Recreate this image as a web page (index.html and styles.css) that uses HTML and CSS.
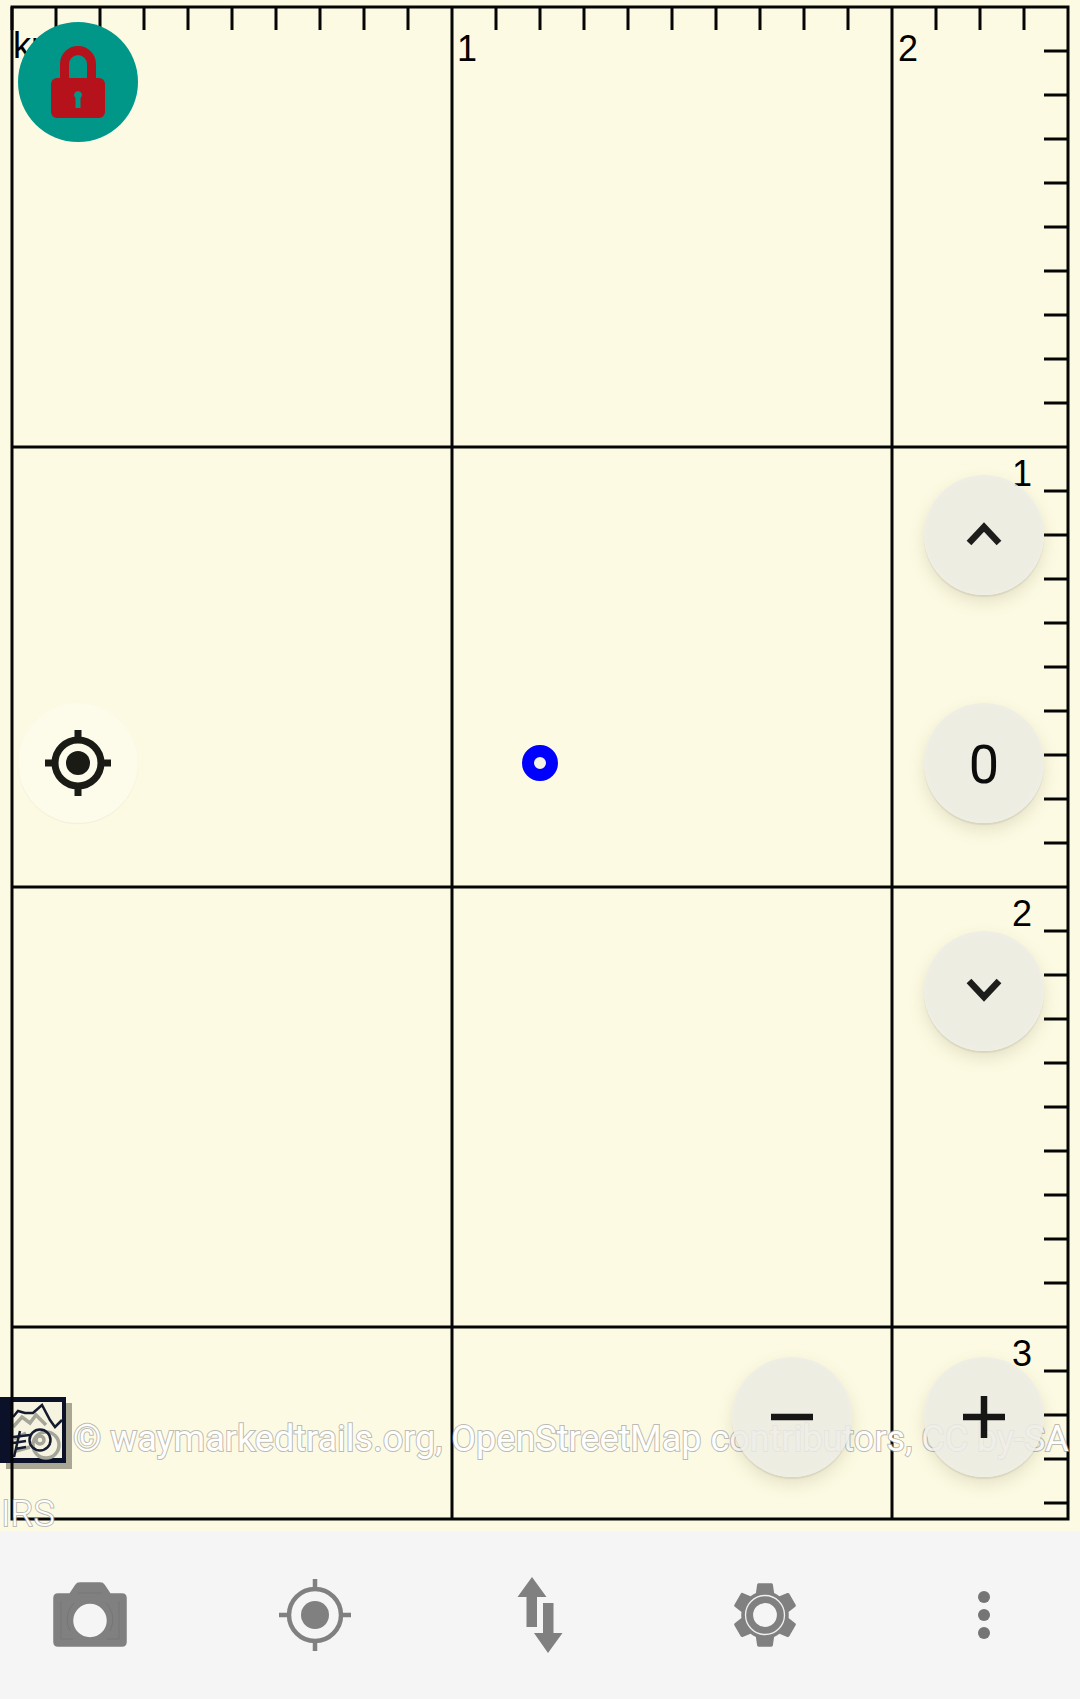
FILE: index.html
```html
<!DOCTYPE html>
<html lang="en">
<head>
<meta charset="utf-8">
<title>Map</title>
<link rel="stylesheet" href="styles.css">
</head>
<body>
<div class="screen">
  <main class="map">
    <svg class="overlay-thumb" width="72" height="72" viewBox="0 0 72 72">
      <rect class="thumb-shadow" x="6" y="6" width="66" height="66"/>
      <rect class="thumb-frame" x="0" y="0" width="66" height="66"/>
      <rect class="thumb-inner" x="13" y="5" width="49" height="56"/>
      <path class="thumb-hill-soft" d="M13 30 22 20 30 26 36 18 46 28M14 42 26 36M16 54 30 50"/>
      <circle class="thumb-hill-soft" cx="46" cy="48" r="13"/>
      <circle class="thumb-hill-soft" cx="40" cy="43" r="4"/>
      <path class="thumb-hill" d="M13 20 18 14 25 16 33 16 42 8 50 23 55 30 62 23M13 40 30 38M13 46 26 44M15 52 26 50M20 34 14 60"/>
      <circle class="thumb-hill" cx="40" cy="43" r="10.500"/>
    </svg>

    <svg class="ruler" width="1080" height="1531" viewBox="0 0 1080 1531">
      <path class="ruler-lines" d="M12 7H1068V1519H12ZM452 7V1519M892 7V1519M12 447H1068M12 887H1068M12 1327H1068"/>
      <path class="ruler-lines" d="M12 7V30M56 7V30M100 7V30M144 7V30M188 7V30M232 7V30M276 7V30M320 7V30M364 7V30M408 7V30M496 7V30M540 7V30M584 7V30M628 7V30M672 7V30M716 7V30M760 7V30M804 7V30M848 7V30M936 7V30M980 7V30M1024 7V30"/>
      <path class="ruler-lines" d="M1044 51H1068M1044 95H1068M1044 139H1068M1044 183H1068M1044 227H1068M1044 271H1068M1044 315H1068M1044 359H1068M1044 403H1068M1044 491H1068M1044 535H1068M1044 579H1068M1044 623H1068M1044 667H1068M1044 711H1068M1044 755H1068M1044 799H1068M1044 843H1068M1044 931H1068M1044 975H1068M1044 1019H1068M1044 1063H1068M1044 1107H1068M1044 1151H1068M1044 1195H1068M1044 1239H1068M1044 1283H1068M1044 1371H1068M1044 1415H1068M1044 1459H1068M1044 1503H1068"/>
      <text class="ruler-label" x="13" y="58">km</text>
      <text class="ruler-label" x="457" y="61">1</text>
      <text class="ruler-label" x="898" y="61">2</text>
      <text class="ruler-label" x="1012" y="486">1</text>
      <text class="ruler-label" x="1012" y="926">2</text>
      <text class="ruler-label" x="1012" y="1366">3</text>
    </svg>

    <span class="position-dot"></span>

    <p class="attribution">© waymarkedtrails.org, OpenStreetMap contributors, CC by-SA</p>
    <p class="attribution-second">IRS</p>

    <button class="lock-button" type="button" aria-label="Lock">
      <svg width="120" height="120" viewBox="0 0 120 120">
        <path class="lock-shackle" d="M46.500 60V42a13.500 13.500 0 0 1 27 0V60"/>
        <path class="lock-body" fill-rule="evenodd" d="M39 56H81a6 6 0 0 1 6 6V90a6 6 0 0 1-6 6H39a6 6 0 0 1-6-6V62a6 6 0 0 1 6-6ZM60 69a4 4 0 0 0-2.500 7.100V86h5V76.100A4 4 0 0 0 60 69Z"/>
      </svg>
    </button>

    <button class="locate-button" type="button" aria-label="Locate">
      <svg width="68" height="68" viewBox="0 0 68 68">
        <circle class="locate-ring" cx="34" cy="34" r="23"/>
        <circle class="locate-core" cx="34" cy="34" r="12"/>
        <path class="locate-ticks" d="M34 1V12M34 56V67M1 34H12M56 34H67"/>
      </svg>
    </button>

    <button class="round-button up-button" type="button" aria-label="Up">
      <svg width="40" height="28" viewBox="0 0 40 28"><path class="chevron" d="M5 22 20 6 35 22"/></svg>
    </button>
    <button class="round-button zero-button" type="button">0</button>
    <button class="round-button down-button" type="button" aria-label="Down">
      <svg width="40" height="28" viewBox="0 0 40 28"><path class="chevron" d="M5 4 20 20 35 4"/></svg>
    </button>
    <button class="round-button minus-button" type="button" aria-label="Zoom out">
      <svg width="44" height="44" viewBox="0 0 44 44"><path class="zoom-mark" d="M1 22H43"/></svg>
    </button>
    <button class="round-button plus-button" type="button" aria-label="Zoom in">
      <svg width="44" height="44" viewBox="0 0 44 44"><path class="zoom-mark" d="M1 22H43M22 1V43"/></svg>
    </button>
  </main>

  <nav class="toolbar">
    <svg class="tool tool-camera" width="72" height="72" viewBox="0 0 72 72">
      <path class="tool-fill camera-body" fill-rule="evenodd" d="M26 4H46Q49 4 50 6L56 15H68Q72 15 72 19V63Q72 67 68 67H4Q0 67 0 63V19Q0 15 4 15H16L22 6Q23 4 26 4ZM36 24a17.500 17.500 0 1 0 0 35 17.500 17.500 0 0 0 0-35Z"/>
      <path class="camera-detail" d="M7 22V60H19M65 22V60H53M24 14H48M16 52A24 24 0 0 1 20 24M56 52A24 24 0 0 0 52 24"/>
    </svg>
    <svg class="tool" width="72" height="72" viewBox="0 0 72 72">
      <circle class="tool-stroke" cx="36" cy="36" r="26"/>
      <circle class="tool-fill" cx="36" cy="36" r="14"/>
      <path class="tool-stroke" d="M36 0V10M36 62V72M0 36H10M62 36H72"/>
    </svg>
    <svg class="tool" width="72" height="80" viewBox="0 0 72 80">
      <path class="tool-fill" d="M28 2 42.500 22H33V52H22.500V22H13.500ZM39 28H49.500V58H58.500L44 78 30 58H39Z"/>
    </svg>
    <svg class="tool" width="72" height="72" viewBox="1.100 1.100 21.800 21.800">
      <path class="tool-fill" fill-rule="evenodd" d="M19.140 12.940c.04-.3.06-.61.06-.94 0-.32-.02-.64-.07-.94l2.030-1.580c.18-.14.23-.41.12-.61l-1.920-3.320c-.12-.22-.37-.29-.59-.22l-2.390.96c-.5-.38-1.030-.7-1.620-.94l-.36-2.540c-.04-.24-.24-.41-.48-.41h-3.840c-.24 0-.43.17-.47.41l-.36 2.540c-.59.24-1.130.57-1.620.94l-2.390-.96c-.22-.08-.47 0-.59.22L2.740 8.870c-.12.21-.08.47.12.61l2.030 1.580c-.05.3-.09.63-.09.94s.02.64.07.94l-2.030 1.580c-.18.14-.23.41-.12.61l1.920 3.320c.12.22.37.29.59.22l2.390-.96c.5.38 1.030.7 1.620.94l.36 2.540c.05.24.24.41.48.41h3.840c.24 0 .44-.17.47-.41l.36-2.540c.59-.24 1.130-.56 1.620-.94l2.390.96c.22.08.47 0 .59-.22l1.920-3.320c.12-.22.07-.47-.12-.61l-2.010-1.580zM12 8.400a3.600 3.600 0 1 0 0 7.200 3.600 3.600 0 0 0 0-7.200z"/>
      <circle class="gear-ring" cx="12" cy="12" r="5.900"/>
    </svg>
    <svg class="tool tool-dots" width="60" height="60" viewBox="0 0 60 60">
      <circle class="dot" cx="30" cy="12" r="6"/>
      <circle class="dot" cx="30" cy="30" r="6"/>
      <circle class="dot" cx="30" cy="48" r="6"/>
    </svg>
  </nav>
</div>
</body>
</html>
```

FILE: styles.css
```css
* { box-sizing: border-box; }
html, body { margin: 0; padding: 0; }
body { font-family: Roboto, "Liberation Sans", sans-serif; background: #f5f5f5; }

.screen { width: 1080px; height: 1699px; display: flex; flex-direction: column; overflow: hidden; }

.map { position: relative; flex: 0 0 1531px; background: #fcfae2; overflow: hidden; }
.ruler { position: absolute; inset: 0; display: block; }
.ruler-lines { fill: none; stroke: #050505; stroke-width: 3; }
.ruler-label { font-family: "Liberation Sans", Roboto, sans-serif; font-size: 36px; fill: #000; }

.position-dot { position: absolute; left: 522px; top: 745px; width: 36px; height: 36px; border-radius: 50%; border: 12px solid #0000ff; background: #f3f3e6; }

.attribution, .attribution-second {
  position: absolute; margin: 0; white-space: nowrap; font-size: 36px;
  color: #fff;
  -webkit-text-stroke: 2px rgba(150, 150, 150, .65);
  paint-order: stroke fill;
}
.attribution { left: 73px; top: 1417px; line-height: 44px; }
.attribution-second { left: 1px; top: 1499px; line-height: 31px; font-weight: 300; }

.overlay-thumb { position: absolute; left: 0; top: 1397px; }
.thumb-shadow { fill: #a9a793; }
.thumb-frame { fill: #0a1128; }
.thumb-inner { fill: #f6f4e0; }
.thumb-hill { fill: none; stroke: #141a30; stroke-width: 2.500; }
.thumb-hill-soft { fill: none; stroke: #a5a59a; stroke-width: 3.500; }

.lock-button, .locate-button, .round-button {
  position: absolute; width: 120px; height: 120px; border: 0; padding: 0; border-radius: 50%;
  display: flex; align-items: center; justify-content: center;
}
.lock-button { left: 18px; top: 22px; background: #009688; }
.lock-shackle { fill: none; stroke: #b5121b; stroke-width: 9; }
.lock-body { fill: #b5121b; }

.locate-button { left: 18px; top: 703px; background: #fdfbe9; box-shadow: 0 1px 1px rgba(120, 120, 100, .08); }
.locate-ring { fill: none; stroke: #1b1b16; stroke-width: 7; }
.locate-core { fill: #1b1b16; }
.locate-ticks { fill: none; stroke: #1b1b16; stroke-width: 7; }

.round-button {
  background: radial-gradient(circle, rgba(236, 235, 227, .86) 66%, rgba(245, 244, 238, .9) 97%);
  box-shadow: 0 2px 1px rgba(150, 150, 135, .2), 0 7px 16px rgba(120, 115, 80, .18);
  font-family: Roboto, "Liberation Sans", sans-serif; font-size: 54px; line-height: 1; color: #0c0c0c;
}
.up-button { left: 924px; top: 475px; }
.zero-button { left: 924px; top: 703px; padding-top: 4px; }
.down-button { left: 924px; top: 931px; }
.minus-button { left: 732px; top: 1357px; }
.plus-button { left: 924px; top: 1357px; }
.chevron { fill: none; stroke: #1d1d1b; stroke-width: 6.500; }
.zoom-mark { fill: none; stroke: #161614; stroke-width: 6.500; }

.toolbar { flex: 1; display: flex; align-items: center; gap: 153px; padding: 0 0 0 54px; background: #f5f5f5; }
.tool { flex: none; display: block; }
.tool-camera { overflow: visible; }
.tool-fill { fill: #808080; }
.camera-body { stroke: #808080; stroke-width: 1.500; }
.camera-detail { fill: none; stroke: #767676; stroke-width: 1; }
.tool-stroke { fill: none; stroke: #808080; stroke-width: 4.500; }
.gear-ring { fill: none; stroke: #f0f0f0; stroke-width: .4; }
.dot { fill: #757575; }
```
